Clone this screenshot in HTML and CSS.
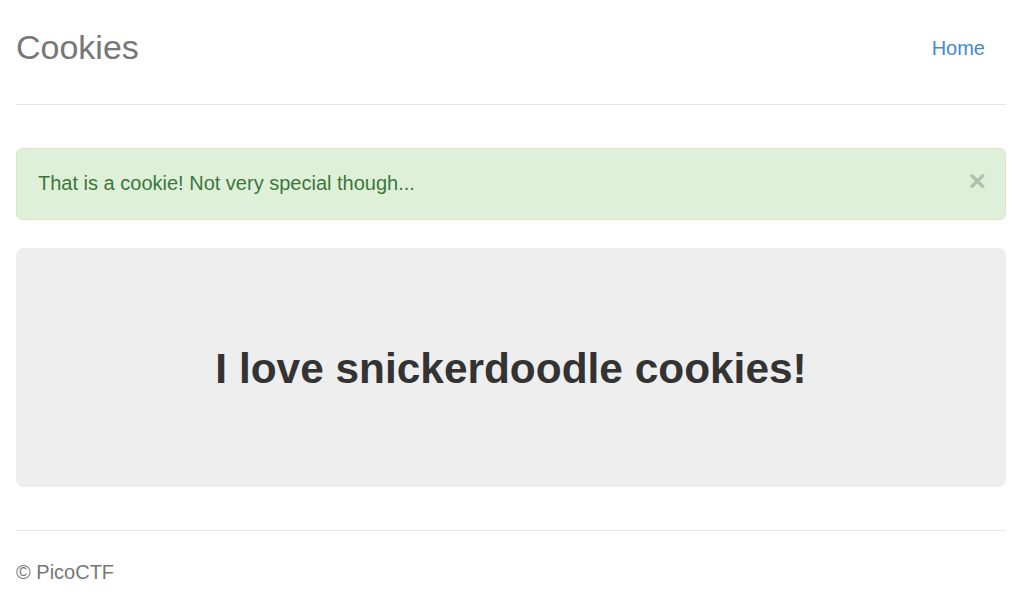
FILE: index.html
```html
<!DOCTYPE html>
<html lang="en">
<head>
<meta charset="utf-8">
<title>Cookies</title>
<link rel="stylesheet" href="styles.css">
</head>
<body>
<div class="container">
  <div class="header">
    <h3 class="brand">Cookies</h3>
    <nav class="nav">
      <a class="nav-link" href="#">Home</a>
    </nav>
  </div>
  <div class="alert">
    <span class="close">&times;</span>
    That is a cookie! Not very special though...
  </div>
  <div class="jumbotron">
    <h2 class="jumbo-title">I love snickerdoodle cookies!</h2>
  </div>
  <footer class="footer">
    <p class="footer-text">&copy; PicoCTF</p>
  </footer>
</div>
</body>
</html>
```

FILE: styles.css
```css
html, body {
  margin: 0;
  padding: 0;
  background: #fff;
}
body {
  font-family: "Liberation Sans", Arial, sans-serif;
  font-size: 20px;
  line-height: 28.5px;
  color: #333;
}
.container {
  padding: 0 18px 0 16px;
}
.header {
  display: flex;
  justify-content: space-between;
  align-items: flex-start;
  padding-top: 19px;
  padding-bottom: 27px;
  border-bottom: 1px solid #e5e5e5;
}
.brand {
  margin: 0;
  font-size: 34px;
  font-weight: normal;
  line-height: 57px;
  color: #777;
}
.nav {
  display: flex;
}
.nav-link {
  display: block;
  padding: 15px 21px 14px 21px;
  color: #428bca;
  text-decoration: none;
}
.alert {
  position: relative;
  margin-top: 43px;
  margin-bottom: 28px;
  padding: 20px 50px 22px 21px;
  background: #dff0d8;
  border: 1px solid #d6e9c6;
  border-radius: 6px;
  color: #3c763d;
}
.close {
  position: absolute;
  top: 17px;
  right: 19px;
  font-size: 30px;
  font-weight: bold;
  line-height: 30px;
  color: #000;
  opacity: 0.2;
}
.jumbotron {
  padding: 98px 0 95px;
  background: #eee;
  border-radius: 8px;
  text-align: center;
}
.jumbo-title {
  margin: 0;
  font-size: 42.4px;
  font-weight: bold;
  line-height: 46px;
  color: #333;
}
.footer {
  margin-top: 43px;
  padding-top: 27px;
  border-top: 1px solid #e5e5e5;
  color: #777;
}
.footer-text {
  margin: 0;
}
```
